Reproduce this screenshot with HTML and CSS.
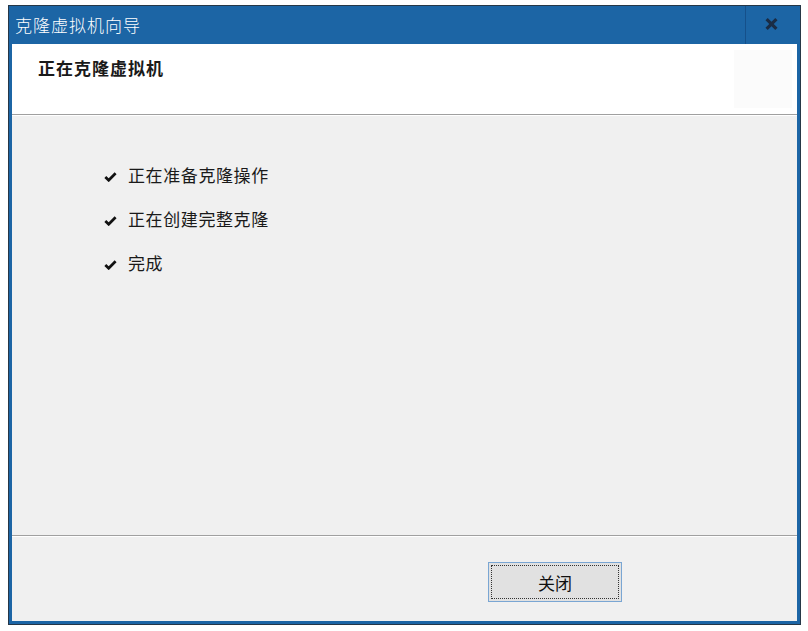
FILE: index.html
```html
<!DOCTYPE html>
<html lang="zh-CN">
<head>
<meta charset="utf-8">
<title>克隆虚拟机向导</title>
<link rel="stylesheet" href="styles.css">
</head>
<body>
<div class="window">
  <div class="titlebar">
    <div class="title">克隆虚拟机向导</div>
    <div class="close">
      <svg width="13" height="12" viewBox="0 0 13 12"><path d="M1.6 1.2 L11.4 10.8 M11.4 1.2 L1.6 10.8" stroke="#1a2c45" stroke-width="3.2" fill="none"/></svg>
    </div>
  </div>
  <div class="body">
    <div class="header">
      <div class="header-title">正在克隆虚拟机</div>
      <div class="header-icon"></div>
    </div>
    <div class="content">
      <ul class="steps">
        <li class="step"><svg class="check" width="13" height="10" viewBox="0 0 13 10"><path d="M1.3 5.0 L4.7 8.3 L11.6 1.3" stroke="#111" stroke-width="2.7" fill="none"/></svg><span>正在准备克隆操作</span></li>
        <li class="step"><svg class="check" width="13" height="10" viewBox="0 0 13 10"><path d="M1.3 5.0 L4.7 8.3 L11.6 1.3" stroke="#111" stroke-width="2.7" fill="none"/></svg><span>正在创建完整克隆</span></li>
        <li class="step"><svg class="check" width="13" height="10" viewBox="0 0 13 10"><path d="M1.3 5.0 L4.7 8.3 L11.6 1.3" stroke="#111" stroke-width="2.7" fill="none"/></svg><span>完成</span></li>
      </ul>
    </div>
    <div class="footer">
      <button class="btn"><span class="btn-focus">关闭</span></button>
    </div>
  </div>
</div>
</body>
</html>
```
FILE: styles.css
```css
html, body {
  margin: 0;
  padding: 0;
  background: #ffffff;
}
body {
  font-family: "Noto Sans CJK SC", "Noto Sans", sans-serif;
  color: #1a1a1a;
}
.window {
  margin: 5px 0 0 8px;
  width: 793px;
  height: 620px;
  box-sizing: border-box;
  border: 1px solid #263747;
  background: #1c65a5;
  padding: 0 3px 3px 3px;
  display: flex;
  flex-direction: column;
}
.titlebar {
  height: 38px;
  display: flex;
  align-items: stretch;
  flex-shrink: 0;
}
.title {
  flex: 1;
  color: #ffffff;
  font-size: 17px;
  font-weight: 300;
  letter-spacing: 1px;
  line-height: 38px;
  padding-left: 3px;
}
.close {
  width: 52px;
  border-left: 1px solid #15508a;
  display: flex;
  align-items: center;
  justify-content: center;
  padding-bottom: 2px;
  box-sizing: border-box;
}
.body {
  flex: 1;
  background: #f0f0f0;
  display: flex;
  flex-direction: column;
}
.header {
  height: 70px;
  background: #ffffff;
  border-bottom: 1px solid #a0a0a0;
  box-shadow: 0 1px 0 #ffffff;
  display: flex;
  justify-content: space-between;
  align-items: flex-start;
  flex-shrink: 0;
}
.header-title {
  font-size: 17px;
  font-weight: bold;
  letter-spacing: 1px;
  line-height: 22px;
  padding: 13px 0 0 26px;
}
.header-icon {
  width: 58px;
  height: 58px;
  margin: 6px 5px 0 0;
  background: #fbfbfb;
}
.content {
  flex: 1;
  margin-top: 1px;
}
.steps {
  list-style: none;
  margin: 0;
  padding: 46px 0 0 92px;
}
.step {
  height: 44px;
  display: flex;
  align-items: flex-start;
  font-size: 17px;
  letter-spacing: 0.6px;
  line-height: 26px;
}
.check {
  margin: 10px 11px 0 0;
  flex-shrink: 0;
}
.footer {
  height: 86px;
  border-top: 1px solid #a0a0a0;
  box-shadow: inset 0 1px 0 #ffffff;
  flex-shrink: 0;
  padding: 26px 0 0 476px;
  box-sizing: border-box;
}
.btn {
  width: 134px;
  height: 40px;
  border: 1px solid #7aa6d3;
  background: #e1e1e1;
  padding: 2px;
  box-sizing: border-box;
  font-family: "Noto Sans CJK SC", "Noto Sans", sans-serif;
  font-size: 17px;
  color: #111;
  display: block;
}
.btn-focus {
  display: flex;
  align-items: center;
  justify-content: center;
  height: 100%;
  border: 1px dotted #333;
  box-sizing: border-box;
}
```
